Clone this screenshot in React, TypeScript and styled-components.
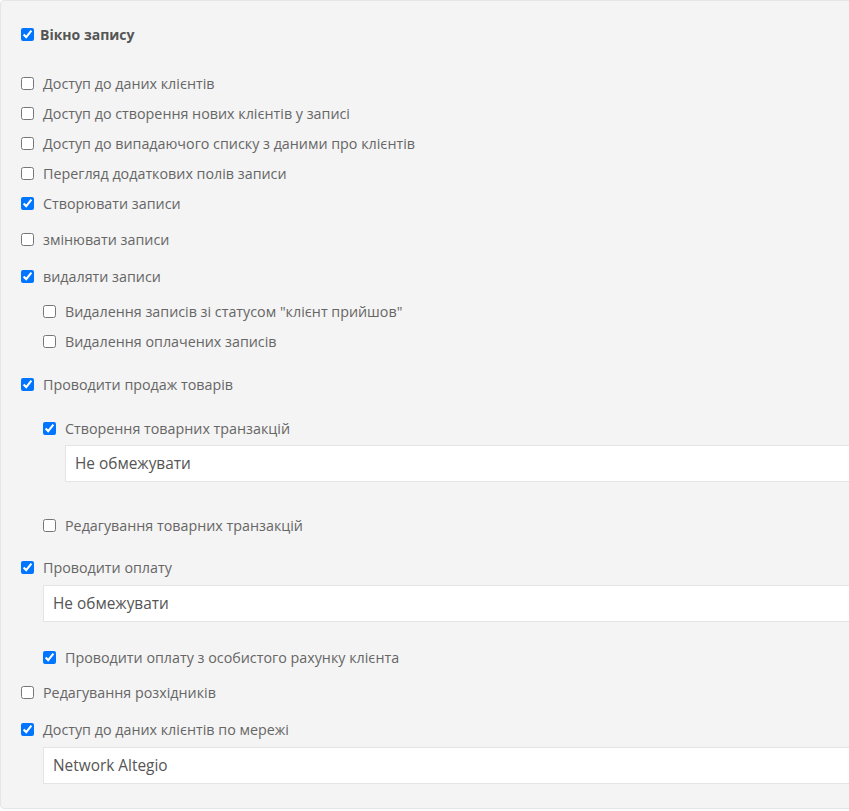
import React from 'react';
import styled, { createGlobalStyle } from 'styled-components';

const GlobalStyle = createGlobalStyle`
  html, body {
    margin: 0;
    padding: 0;
    background: #ffffff;
    overflow: hidden;
  }
  body {
    font-family: 'Open Sans', 'Noto Sans', sans-serif;
  }
`;

const Panel = styled.div`
  box-sizing: border-box;
  width: calc(100vw + 40px);
  background: #f4f4f4;
  border: 1px solid #e6e6e6;
  border-radius: 4px;
  padding: 23px 20px 24px 20px;
`;

const Header = styled.label`
  display: flex;
  align-items: center;
  height: 20px;
  font-size: 14px;
  font-weight: 700;
  color: #555;
`;

const Row = styled.label<{ $indent: number; $mt: number }>`
  display: flex;
  align-items: center;
  height: 20px;
  margin-top: ${(p) => p.$mt}px;
  padding-left: ${(p) => p.$indent * 22}px;
  font-size: 14.3px;
  color: #666;
`;

const Box = styled.input<{ $space: number }>`
  width: 13px;
  height: 13px;
  margin: 0 ${(p) => p.$space}px 0 0;
  flex: none;
`;

const Select = styled.div<{ $indent: number; $mt: number }>`
  box-sizing: border-box;
  height: 37px;
  margin-top: ${(p) => p.$mt}px;
  margin-left: ${(p) => p.$indent * 22}px;
  background: #fff;
  border: 1px solid #e4e4e4;
  padding: 0 9px;
  display: flex;
  align-items: center;
  font-size: 15.4px;
  color: #555;
`;

type Item =
  | { kind: 'check'; label: string; checked: boolean; indent: number; mt: number }
  | { kind: 'select'; value: string; indent: number; mt: number };

const items: Item[] = [
  { kind: 'check', label: 'Доступ до даних клієнтів', checked: false, indent: 0, mt: 29 },
  { kind: 'check', label: 'Доступ до створення нових клієнтів у записі', checked: false, indent: 0, mt: 10 },
  { kind: 'check', label: 'Доступ до випадаючого списку з даними про клієнтів', checked: false, indent: 0, mt: 10 },
  { kind: 'check', label: 'Перегляд додаткових полів записи', checked: false, indent: 0, mt: 10 },
  { kind: 'check', label: 'Створювати записи', checked: true, indent: 0, mt: 10 },
  { kind: 'check', label: 'змінювати записи', checked: false, indent: 0, mt: 16 },
  { kind: 'check', label: 'видаляти записи', checked: true, indent: 0, mt: 17 },
  { kind: 'check', label: 'Видалення записів зі статусом "клієнт прийшов"', checked: false, indent: 1, mt: 15 },
  { kind: 'check', label: 'Видалення оплачених записів', checked: false, indent: 1, mt: 10 },
  { kind: 'check', label: 'Проводити продаж товарів', checked: true, indent: 0, mt: 23 },
  { kind: 'check', label: 'Створення товарних транзакцій', checked: true, indent: 1, mt: 24 },
  { kind: 'select', value: 'Не обмежувати', indent: 2, mt: 7 },
  { kind: 'check', label: 'Редагування товарних транзакцій', checked: false, indent: 1, mt: 33 },
  { kind: 'check', label: 'Проводити оплату', checked: true, indent: 0, mt: 22 },
  { kind: 'select', value: 'Не обмежувати', indent: 1, mt: 8 },
  { kind: 'check', label: 'Проводити оплату з особистого рахунку клієнта', checked: true, indent: 1, mt: 25 },
  { kind: 'check', label: 'Редагування розхідників', checked: false, indent: 0, mt: 15 },
  { kind: 'check', label: 'Доступ до даних клієнтів по мережі', checked: true, indent: 0, mt: 17 },
  { kind: 'select', value: 'Network Altegio', indent: 1, mt: 8 },
];

export default function App() {
  return (
    <>
      <GlobalStyle />
      <Panel>
        <Header>
          <Box type="checkbox" defaultChecked $space={6} />
          Вікно запису
        </Header>
        {items.map((it, i) =>
          it.kind === 'check' ? (
            <Row key={i} $indent={it.indent} $mt={it.mt}>
              <Box type="checkbox" defaultChecked={it.checked} $space={9} />
              {it.label}
            </Row>
          ) : (
            <Select key={i} $indent={it.indent} $mt={it.mt}>
              {it.value}
            </Select>
          )
        )}
      </Panel>
    </>
  );
}
